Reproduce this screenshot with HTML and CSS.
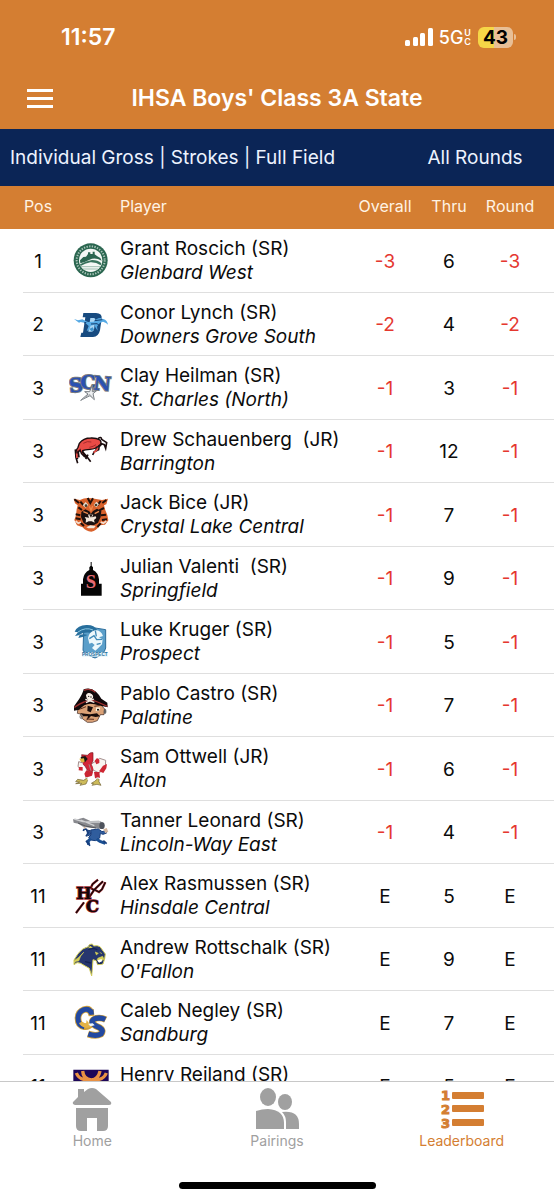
FILE: index.html
```html
<!DOCTYPE html>
<html lang="en">
<head>
<meta charset="utf-8">
<meta name="viewport" content="width=device-width, initial-scale=1">
<title>IHSA Boys' Class 3A State</title>
<link rel="stylesheet" href="styles.css">
</head>
<body>
<div class="app">
  <header class="top">
    <div class="status">
      <span class="clock">11:57</span>
      <div class="indicators">
        <svg class="signal" viewBox="0 0 28 18" aria-hidden="true"><rect x="0" y="12" width="5" height="6" rx="1.5"/><rect x="8" y="9" width="5" height="9" rx="1.5"/><rect x="15" y="5" width="5" height="13" rx="1.5"/><rect x="23" y="0" width="5" height="18" rx="1.5"/></svg>
        <span class="network">5G</span>
        <span class="band"><span>U</span><span>C</span></span>
        <span class="battery">43</span>
        <span class="battery-tip"></span>
      </div>
    </div>
    <div class="nav">
      <button class="menu" type="button" aria-label="Menu"><span></span><span></span><span></span></button>
      <h1>IHSA Boys' Class 3A State</h1>
    </div>
  </header>
  <div class="filters">
    <button class="filter" type="button">Individual Gross | Strokes | Full Field</button>
    <button class="filter rounds" type="button">All Rounds</button>
  </div>
  <main class="scroll">
    <table class="board">
      <thead>
        <tr><th class="pos">Pos</th><th class="logo"></th><th class="player">Player</th><th class="num">Overall</th><th class="num">Thru</th><th class="num last">Round</th></tr>
      </thead>
      <tbody>
        <tr>
          <td class="pos">1</td>
          <td class="logo"><svg viewBox="27 31 132 120" aria-hidden="true"><circle cx="92" cy="89" r="51" fill="#2b6650"/><circle cx="92" cy="89" r="42" fill="none" stroke="#a9c4b8" stroke-width="6" stroke-dasharray="4 4"/><circle cx="92" cy="89" r="35" fill="#f4f8f5"/><path d="M60 89 L70 79 L78 78 L84 70 V65 H91 V70 H98 V63 H104 V71 L112 77 L121 82 L125 90 Q105 79 89 87 Q75 94 61 98 Z" fill="#2b6650"/><path d="M60 101 Q78 90 96 88 Q114 88 124 98 L122 104 Q108 94 91 95 Q75 98 62 106 Z" fill="#39735d"/><path d="M63 108 H120 M69 115 H114" stroke="#9fbfb1" stroke-width="3"/></svg></td>
          <td class="player"><span>Grant Roscich (SR)</span><em>Glenbard West</em></td>
          <td class="num under">-3</td><td class="num">6</td><td class="num last under">-3</td>
        </tr>
        <tr>
          <td class="pos">2</td>
          <td class="logo"><svg viewBox="27 222 132 120" aria-hidden="true"><path d="M70 246 H108 Q127 247 125 263 L120 298 Q116 317 99 318 H61 L64 305 H69 L76 259 H68 Z" fill="#174b80"/><path d="M91 261 H102 Q107 262 106 268 L102 296 Q100 302 94 302 H85 Z" fill="#a9d5f3"/><path d="M42 264 L54 268 L67 265 L84 273 L101 272 Q110 261 121 261 Q126 264 130 264 Q142 268 144 281 L138 276 L129 272 Q119 274 116 280 L111 287 L113 299 L106 289 L103 281 L92 284 L87 297 L80 300 L86 285 L76 276 L62 273 L57 275 Z" fill="#55a9e4"/><path d="M104 269 L127 266 M93 279 L111 278 L120 285 M79 274 L72 276" fill="none" stroke="#153f70" stroke-width="3"/><path d="M88 294 L98 289 L102 296 L95 301 Z" fill="#3d91cb"/></svg></td>
          <td class="player"><span>Conor Lynch (SR)</span><em>Downers Grove South</em></td>
          <td class="num under">-2</td><td class="num">4</td><td class="num last under">-2</td>
        </tr>
        <tr>
          <td class="pos">3</td>
          <td class="logo"><svg viewBox="27 37 132 120" aria-hidden="true"><g class="scn"><text x="27" y="109" transform="rotate(-6 45 85)">S</text><text x="61" y="99">C</text><text x="101" y="104" transform="rotate(5 125 80)">N</text></g><path d="M62 134 L84 115 L74 108 L89 108 L97 87 L97 108 L110 105 L99 114 L103 132 L90 120 Z" fill="#eef0f2" stroke="#777d83" stroke-width="3"/><path d="M64 133 L89 116 L102 130" fill="none" stroke="#a2a6aa" stroke-width="3"/></svg></td>
          <td class="player"><span>Clay Heilman (SR)</span><em>St. Charles (North)</em></td>
          <td class="num under">-1</td><td class="num">3</td><td class="num last under">-1</td>
        </tr>
        <tr>
          <td class="pos">3</td>
          <td class="logo"><svg viewBox="27 228 132 120" aria-hidden="true"><path d="M58 262 Q70 246 92 246 Q108 245 120 252 Q127 262 118 268 Q108 279 90 280 Q74 281 68 284 Q70 296 82 306 L72 301 Q62 292 60 282 L51 294 L53 309 L47 300 Q46 284 54 274 Z" fill="#e94b46" stroke="#1a0c0e" stroke-width="4"/><path d="M114 248 Q124 240 125 250 L140 260 L137 277 L133 266 L125 263 L120 270 M118 267 L116 281 L103 287 L98 297 M110 272 L108 284 M46 280 L48 305 L53 322 M54 284 L57 304 M66 286 L80 301 L92 317 M84 296 L77 309" fill="none" stroke="#1a0c0e" stroke-width="5"/><path d="M113 276 L110 283 L101 290 M50 292 L51 306" fill="none" stroke="#e94b46" stroke-width="5"/><path d="M70 262 Q82 254 94 258 M88 274 Q100 272 108 266" fill="none" stroke="#a62a2b" stroke-width="3"/></svg></td>
          <td class="player"><span>Drew Schauenberg&nbsp; (JR)</span><em>Barrington</em></td>
          <td class="num under">-1</td><td class="num">12</td><td class="num last under">-1</td>
        </tr>
        <tr>
          <td class="pos">3</td>
          <td class="logo"><svg viewBox="27 28 132 120" aria-hidden="true"><path d="M41 39 L60 43 Q76 34 95 38 L126 43 L144 39 L139 56 L132 59 L136 74 L142 88 L145 104 L135 117 L119 119 Q109 136 94 138 Q77 137 68 125 L51 119 L43 103 L48 89 L50 71 L53 59 L45 53 Z" fill="#d9622c"/><path d="M43 41 L57 52 M139 43 L127 52 M83 37 L91 52 L99 38 M61 48 L70 58 M122 46 L112 59 M55 65 L66 73 M132 67 L118 74 M47 86 L61 89 M138 87 L123 89 M47 98 L62 101 M141 101 L126 103 M62 112 L72 121 M122 113 L112 124" stroke="#21100b" stroke-width="6" fill="none"/><path d="M64 79 L76 71 L88 77 L93 84 L99 76 L111 69 L124 76 L122 94 L114 111 L101 119 H83 L71 112 L63 94 Z" fill="#1c1110"/><path d="M68 59 L77 49 L85 58 L77 66 Z M101 58 L109 48 L117 56 L109 65 Z" fill="#e7ded1"/><circle cx="78" cy="60" r="4" fill="#463b2c"/><circle cx="108" cy="58" r="4" fill="#463b2c"/><path d="M88 62 L93 74 L98 61 M70 78 L84 84 M117 77 L104 84" stroke="#ee8a4d" stroke-width="4" fill="none"/><path d="M84 87 L91 84 L100 87 L96 95 L107 92 L109 97 L102 103 L104 111 L95 107 H86 L77 111 L78 101 L74 94 L87 96 Z M79 125 L91 119 L107 121 L102 128 H85 Z" fill="#f4e8dc"/><path d="M87 86 H98 L93 96 Z" fill="#261814"/><path d="M47 106 L55 113 L63 109 M139 106 L130 113 L122 109" stroke="#f3ded0" stroke-width="5" fill="none"/></svg></td>
          <td class="player"><span>Jack Bice (JR)</span><em>Crystal Lake Central</em></td>
          <td class="num under">-1</td><td class="num">7</td><td class="num last under">-1</td>
        </tr>
        <tr>
          <td class="pos">3</td>
          <td class="logo"><svg viewBox="27 219 132 120" aria-hidden="true"><path d="M92 228 H95 V239 L99 244 V252 Q115 260 117 280 V293 H125 V329 H63 V293 H69 V280 Q72 260 88 252 V244 L92 239 Z" fill="#050505"/><text class="dome-letter" x="77" y="305">S</text></svg></td>
          <td class="player"><span>Julian Valenti&nbsp; (SR)</span><em>Springfield</em></td>
          <td class="num under">-1</td><td class="num">9</td><td class="num last under">-1</td>
        </tr>
        <tr>
          <td class="pos">3</td>
          <td class="logo"><svg viewBox="27 34 132 120" aria-hidden="true"><path d="M71 62 L88 56 L106 52 L137 57 V112 Q133 131 105 142 Q78 134 69 120 Z" fill="#5b9fca" stroke="#2c6d9b" stroke-width="3"/><path d="M44 63 Q53 43 79 43 Q103 42 111 57 L97 69 Q79 61 56 73 Q71 68 83 73 Q66 80 55 82 L59 73 L45 76 L54 65 Z" fill="#286f9d"/><path d="M54 64 Q76 48 99 58" fill="none" stroke="#8bc8e3" stroke-width="3"/><path d="M84 82 Q88 63 105 59 Q123 58 129 76 L117 80 L128 86 L126 101 L115 112 L106 120 L96 112 L104 103 L96 96 L88 99 Z" fill="#edf8fc"/><path d="M88 84 L102 75 L110 87 L127 86 M106 60 L109 77 M110 101 L122 98" fill="none" stroke="#3f8ab8" stroke-width="4"/><path d="M66 124 H144 V138 H66 Z" fill="#e5f4fa"/><text class="shield-word" x="66" y="136">PROSPECT</text></svg></td>
          <td class="player"><span>Luke Kruger (SR)</span><em>Prospect</em></td>
          <td class="num under">-1</td><td class="num">5</td><td class="num last under">-1</td>
        </tr>
        <tr>
          <td class="pos">3</td>
          <td class="logo"><svg viewBox="27 225 132 120" aria-hidden="true"><path d="M55 284 Q72 275 91 274 L123 282 L134 294 L132 311 L121 311 L112 329 L97 334 H82 L67 323 L61 309 L52 307 Z" fill="#dba277" stroke="#3a211b" stroke-width="2"/><path d="M42 286 L57 265 Q69 246 71 235 Q91 228 108 242 Q118 251 124 263 L142 275 L143 289 Q119 284 104 280 Q76 272 58 296 L42 299 Z" fill="#11090b"/><path d="M43 289 Q60 277 72 273 Q94 263 113 273 L142 286 M72 238 Q91 230 106 244" fill="none" stroke="#9c302f" stroke-width="4"/><path d="M80 253 Q82 246 91 249 Q99 252 97 260 L90 267 L82 261 Z M76 265 L103 274 M102 264 L78 275" fill="#f8eee6" stroke="#f8eee6" stroke-width="4"/><circle cx="86" cy="256" r="2" fill="#14100f"/><circle cx="93" cy="258" r="2" fill="#14100f"/><path d="M83 284 L99 289 L92 304 L82 300 Z M60 306 Q75 308 91 310 L111 307 L120 316 L107 318 L93 315 L79 329 L84 316 L68 316 Z" fill="#170c0b"/><path d="M109 289 L121 290 L116 301 L107 300 Z" fill="#fff5df"/><circle cx="114" cy="296" r="3"/><path d="M61 294 L78 287 M103 286 L122 283 M80 324 L102 325" stroke="#5d3020" stroke-width="3" fill="none"/><ellipse cx="64" cy="317" rx="4" ry="6" fill="none" stroke="#777" stroke-width="3"/><ellipse cx="135" cy="301" rx="3" ry="7" fill="#666" stroke="#555" stroke-width="2"/></svg></td>
          <td class="player"><span>Pablo Castro (SR)</span><em>Palatine</em></td>
          <td class="num under">-1</td><td class="num">7</td><td class="num last under">-1</td>
        </tr>
        <tr>
          <td class="pos">3</td>
          <td class="logo"><svg viewBox="27 40 132 120" aria-hidden="true"><path d="M65 57 L82 59 Q91 48 99 51 V75 L94 87 L103 99 L96 109 L82 104 L75 91 L68 85 Z" fill="#d22837" stroke="#791823" stroke-width="2"/><path d="M62 64 L76 61 L83 70 L75 80 L64 77 Z" fill="#171512"/><path d="M58 69 L72 68 L74 78 L65 82 Z" fill="#e0b43c"/><path d="M69 82 L56 78 L54 93 L62 100 M96 84 L119 68 L137 74 L136 98 L117 112 L101 104 M87 86 L93 105" fill="#f8f5f0" stroke="#a48e8e" stroke-width="3"/><path d="M104 75 L111 67 L118 72 V82 L109 86 Z M107 90 L119 86 M117 107 L129 90 L141 85 L139 98 L130 112 Z M57 94 H68 V105 L56 104 Z" fill="#ce2733"/><path d="M79 104 L99 109 L96 120 L77 126 L73 114 Z M102 109 H118 L120 126 L105 128 Z" fill="#ca2533"/><path d="M80 124 V133 L69 138 M113 125 V137 L103 145" fill="none" stroke="#d9d5ca" stroke-width="7"/><path d="M80 128 L71 134 L53 131 L47 138 L59 139 L47 144 L65 143 L60 149 L78 145 L83 134 M112 130 L104 137 L94 143 L101 144 L96 149 L111 146 L123 149 L117 138 V130" fill="#cdbb5a" stroke="#706032" stroke-width="2"/></svg></td>
          <td class="player"><span>Sam Ottwell (JR)</span><em>Alton</em></td>
          <td class="num under">-1</td><td class="num">6</td><td class="num last under">-1</td>
        </tr>
        <tr>
          <td class="pos">3</td>
          <td class="logo"><svg viewBox="27 231 132 120" aria-hidden="true"><path d="M39 250 L56 249 L70 245 L91 255 L117 254 L130 260 L134 270 L125 279 L106 277 L91 275 L69 272 L55 263 L41 260 Z" fill="#88898e"/><path d="M43 249 L69 257 L92 258 L120 258 M62 252 L103 269" fill="none" stroke="#d0d1d3" stroke-width="4"/><path d="M54 261 L76 270 L108 276" fill="none" stroke="#55575c" stroke-width="3"/><ellipse cx="126" cy="269" rx="8" ry="10" fill="#4e535c"/><path d="M79 282 L90 284 L92 296 L82 300 M92 282 L115 279 L126 287 L137 284 L140 291 L129 295 L121 292 L119 306 L106 314 L93 312 L86 304 L94 296 Z" fill="#305d9d" stroke="#173d7b" stroke-width="3"/><path d="M92 308 L84 316 L86 326 M110 310 L120 316 L136 322" stroke="#194e92" fill="none" stroke-width="9"/><path d="M70 285 Q72 277 79 280 L85 290 L78 301 M78 314 L90 329 M130 314 L140 323" stroke="#173d7b" fill="none" stroke-width="5"/><path d="M130 280 L140 276 L145 287 L136 292 Z M74 280 L70 273 L78 272 Z" fill="#d4b7a0"/></svg></td>
          <td class="player"><span>Tanner Leonard (SR)</span><em>Lincoln-Way East</em></td>
          <td class="num under">-1</td><td class="num">4</td><td class="num last under">-1</td>
        </tr>
        <tr>
          <td class="pos">11</td>
          <td class="logo"><svg viewBox="27 40 132 120" aria-hidden="true"><g fill="none"><path d="M48 151 L72 119 M88 103 L103 81 L129 56 M102 82 L92 76 L98 64 L114 51 M105 82 L117 88 L126 80 L136 59" stroke="#9b2830" stroke-width="7"/><path d="M48 151 L72 119 M88 103 L103 81 L129 56 M102 82 L92 76 L98 64 L114 51 M105 82 L117 88 L126 80 L136 59" stroke="#190808" stroke-width="4"/></g><g class="hc-edge"><text x="48" y="110">H</text><text x="77" y="148">C</text></g></svg></td>
          <td class="player"><span>Alex Rasmussen (SR)</span><em>Hinsdale Central</em></td>
          <td class="num">E</td><td class="num">5</td><td class="num last">E</td>
        </tr>
        <tr>
          <td class="pos">11</td>
          <td class="logo"><svg viewBox="27 231 132 120" aria-hidden="true"><path d="M42 291 L54 272 Q68 254 85 251 Q86 242 97 243 L101 249 Q112 246 120 251 L130 265 L136 273 L134 287 L129 303 L113 305 L108 293 L99 290 L97 317 L95 339 L88 316 L72 307 L62 301 Q51 295 42 305 Z" fill="#26366e" stroke="#d4ce55" stroke-width="3"/><path d="M42 293 Q55 287 71 268 L62 279 L56 294 Q49 292 42 301 M85 256 L91 249 L97 255 M105 267 L115 271 L108 276 M119 268 L126 272 M113 286 L128 280 L132 289 L117 297 L111 289" fill="#d5cf56" stroke="#d5cf56" stroke-width="2"/><path d="M85 259 L101 256 L112 260 M75 296 L93 300 M113 300 L125 301" stroke="#142451" fill="none" stroke-width="4"/><path d="M112 292 L125 288 L126 295 L117 299 Z" fill="#fff"/></svg></td>
          <td class="player"><span>Andrew Rottschalk (SR)</span><em>O'Fallon</em></td>
          <td class="num">E</td><td class="num">9</td><td class="num last">E</td>
        </tr>
        <tr>
          <td class="pos">11</td>
          <td class="logo"><svg viewBox="27 37 132 120" aria-hidden="true"><g fill="none"><path d="M102 65 L93 66 Q88 52 72 57 Q54 64 54 83 Q54 105 73 108 Q87 109 92 100" stroke="#d0a13d" stroke-width="20"/><path d="M101 64 L93 65 Q86 52 72 57 Q54 64 54 83 Q54 105 73 108" stroke="#2349a0" stroke-width="15"/><path d="M137 87 Q124 80 108 83 Q93 88 98 99 Q105 106 119 111 Q132 119 123 130 Q108 138 84 130" stroke="#d0a13d" stroke-width="20"/><path d="M136 86 Q122 80 108 83 Q93 88 98 99 Q105 106 119 111 Q132 119 123 130 Q108 138 85 130" stroke="#2349a0" stroke-width="16"/></g><path d="M57 97 Q61 107 77 112 L91 110 L101 102 L88 99 L80 88 L78 99 L66 93 Z" fill="#e5b345"/><path d="M84 99 L98 98 L104 104 L91 107 Z" fill="#eaf5ff"/></svg></td>
          <td class="player"><span>Caleb Negley (SR)</span><em>Sandburg</em></td>
          <td class="num">E</td><td class="num">7</td><td class="num last">E</td>
        </tr>
        <tr>
          <td class="pos">11</td>
          <td class="logo"><svg viewBox="27 228 132 120" aria-hidden="true"><path d="M40 236 H146 V342 H40 Z" fill="#1d0658"/><path d="M68 240 Q70 265 94 267 Q115 265 120 240 M49 246 Q56 264 76 266 M139 246 Q132 264 112 266 M78 263 L60 287 M109 263 L128 287 M93 265 V300" fill="none" stroke="#e99143" stroke-width="10"/></svg></td>
          <td class="player"><span>Henry Reiland (SR)</span><em>&nbsp;</em></td>
          <td class="num">E</td><td class="num">5</td><td class="num last">E</td>
        </tr>
      </tbody>
    </table>
  </main>
  <footer class="bottom">
    <nav class="tabs">
      <a class="tab" href="#home">
        <svg viewBox="0 0 44 44" aria-hidden="true"><path d="M8 2 H14 V5 L18 2 Q22 0 26 2 L41 15 Q42 18 39 18 H5 Q2 17 3 15 L8 10 Z"/><path d="M6 21 H38 V39 Q38 44 33 44 H27 V31 H17 V44 H11 Q6 44 6 39 Z"/></svg>
        <span>Home</span>
      </a>
      <a class="tab" href="#pairings">
        <svg viewBox="0 0 44 44" aria-hidden="true"><ellipse cx="13" cy="10" rx="8" ry="9"/><ellipse cx="30" cy="15" rx="7" ry="8"/><path d="M1 42 V24 Q7 22 13 22 Q29 23 29 36 V42 Z"/><path d="M27 25 Q44 23 44 37 V42 H31 V35 Q31 29 27 25 Z"/></svg>
        <span>Pairings</span>
      </a>
      <a class="tab current" href="#leaderboard" aria-current="page">
        <svg viewBox="0 0 44 44" aria-hidden="true"><text x="1" y="13">1</text><text x="1" y="27">2</text><text x="1" y="41">3</text><rect x="12" y="5" width="32" height="7" rx="1"/><rect x="12" y="18" width="32" height="7" rx="1"/><rect x="12" y="32" width="32" height="7" rx="1"/></svg>
        <span>Leaderboard</span>
      </a>
    </nav>
    <div class="home-bar"></div>
  </footer>
</div>
</body>
</html>
```
FILE: styles.css
```css
* { box-sizing: border-box; }
body { margin: 0; background: #fff; color: #0b0b0b; font-family: Inter, "Liberation Sans", sans-serif; }
button { border: 0; padding: 0; background: none; color: inherit; font: inherit; cursor: pointer; }

.app { display: flex; flex-direction: column; height: 100vh; }

.top { padding-bottom: 7px; background: #d47e32; color: #fff; }
.status { display: flex; align-items: center; justify-content: space-between; height: 74px; padding: 0 38px 0 61px; }
.clock { font-size: 23px; font-weight: 600; }
.indicators { display: flex; align-items: center; }
.signal { width: 28px; height: 18px; margin-right: 6px; fill: #fff; }
.network { font-size: 18px; font-weight: 500; }
.band { display: flex; flex-direction: column; margin: 0 7px 0 1px; font-size: 9px; line-height: 9px; font-weight: 600; }
.battery { width: 35px; border-radius: 6px; background: linear-gradient(90deg, #f6d647 45%, #e8bf96 45%); color: #000; font-size: 19px; line-height: 21px; font-weight: 700; text-align: center; }
.battery-tip { width: 2px; height: 6px; margin-left: 1px; border-radius: 0 2px 2px 0; background: #e8bf96; }

.nav { display: grid; grid-template-columns: 53px 1fr 53px; align-items: center; height: 48px; }
.menu { display: flex; flex-direction: column; gap: 5px; padding-left: 27px; }
.menu span { height: 3px; background: #fff; }
h1 { margin: 0; font-size: 23px; line-height: 28px; font-weight: 600; text-align: center; white-space: nowrap; }

.filters { display: flex; height: 57px; flex: none; background: #0b2556; color: #edf3ff; font-size: 19px; }
.filter { flex: 1; padding-left: 10px; text-align: left; white-space: nowrap; }
.rounds { flex: none; width: 158px; padding: 0; text-align: center; }

.scroll { flex: 1; min-height: 0; overflow-y: auto; scrollbar-width: none; }
.board { width: 100%; table-layout: fixed; border-collapse: collapse; }
.board th { height: 43px; padding: 0 0 3px; background: #d47e32; color: #fff3e4; font-size: 16px; font-weight: 400; }
.board td { height: 63px; padding: 0; font-size: 19px; }
.board tbody tr { background: linear-gradient(#dfdfdf, #dfdfdf) 23px 100% / 100% 1px no-repeat; }
.board tr:nth-child(odd) td { height: 64px; }
.board .pos { width: 69px; padding-left: 7px; text-align: center; }
.board .logo { width: 51px; }
.board .player { text-align: left; line-height: 24px; white-space: nowrap; }
.board .num { width: 64px; text-align: center; }
.board .last { width: 73px; padding-right: 15px; }
.board .under { color: #e5382f; }
.player span, .player em { display: block; }
.logo svg { display: block; width: 44px; height: 40px; }

.scn { font: 700 57px "DejaVu Serif", serif; fill: #2b51b2; stroke: #777b80; stroke-width: 6px; paint-order: stroke; }
.dome-letter { font: 700 56px "Liberation Serif", serif; fill: #e66a72; }
.shield-word { font: 700 14px "Liberation Sans", sans-serif; fill: #286f9d; }
.hc-edge { font: 700 50px "DejaVu Serif", serif; fill: #150709; stroke: #9b2830; stroke-width: 4px; paint-order: stroke; }

.bottom { flex: none; height: 119px; border-top: 1px solid #c8c8c8; background: #fff; }
.tabs { display: grid; grid-template-columns: repeat(3, 1fr); padding-top: 5px; }
.tab { display: flex; flex-direction: column; align-items: center; gap: 1px; color: #a0a0a0; font-size: 14px; line-height: 18px; text-decoration: none; }
.tab svg { width: 44px; height: 44px; fill: currentColor; }
.tab text { font: 700 13px "DejaVu Sans", sans-serif; stroke: currentColor; stroke-width: 1px; }
.tab.current { color: #d47e32; }
.home-bar { width: 197px; height: 7px; margin: 32px auto 0; border-radius: 4px; background: #000; }
```
